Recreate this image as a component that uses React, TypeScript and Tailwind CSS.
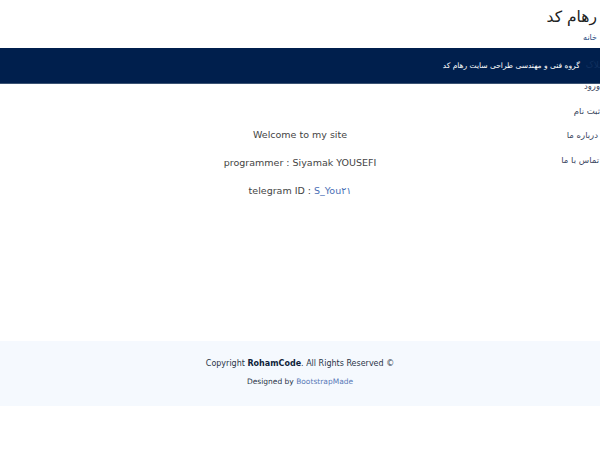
export default function App() {
  const font = { fontFamily: '"DejaVu Sans", "Noto Sans", sans-serif' };
  return (
    <div dir="rtl" style={font} className="relative w-[600px] h-[450px] bg-white overflow-hidden">
      <header className="h-[48px] flex flex-col items-start pr-[3px] pt-[6px]">
        <h1 className="text-[15.5px] leading-[22px] text-[#222]">رهام کد</h1>
        <a className="text-[8px] leading-[12px] mt-[4px] text-[#2b4a80]">خانه</a>
      </header>
      <div className="h-[36px] bg-[#001f4d] border-b border-[#3b5373] flex items-center overflow-hidden">
        <span className="text-[9px] text-[#10305f] mr-[-4px] ml-[6px]">ملاک</span>
        <span className="text-[7.5px] text-white">گروه فنی و مهندسی طراحی سایت رهام کد</span>
      </div>
      <ul className="absolute top-[74px] right-[0px] flex flex-col items-start gap-0 text-[8.5px] text-[#3a4660]">
        <li className="leading-[24.6px] mr-[0px]">ورود</li>
        <li className="leading-[24.6px]">ثبت نام</li>
        <li className="leading-[24.6px] mr-[2px]">درباره ما</li>
        <li className="leading-[24.6px] mr-[1px]">تماس با ما</li>
      </ul>
      <main dir="ltr" className="h-[257px] flex flex-col items-center pt-[37px] text-[9.5px] leading-[28px] text-[#444]">
        <p>Welcome to my site</p>
        <p>programmer : Siyamak YOUSEFI</p>
        <p>
          telegram ID : <a className="text-[#4a6fb5]">S_You۲۱</a>
        </p>
      </main>
      <footer dir="ltr" className="h-[65px] bg-[#f5f9fe] flex flex-col items-center pt-[17px] text-[#2a3548]">
        <p className="text-[8px] leading-[12px]">
          Copyright <strong className="font-bold text-[#0f1f3a]">RohamCode</strong>. All Rights Reserved ©
        </p>
        <p className="text-[7.5px] leading-[12px] mt-[6px]">
          Designed by <a className="text-[#5a79b8]">BootstrapMade</a>
        </p>
      </footer>
    </div>
  );
}
